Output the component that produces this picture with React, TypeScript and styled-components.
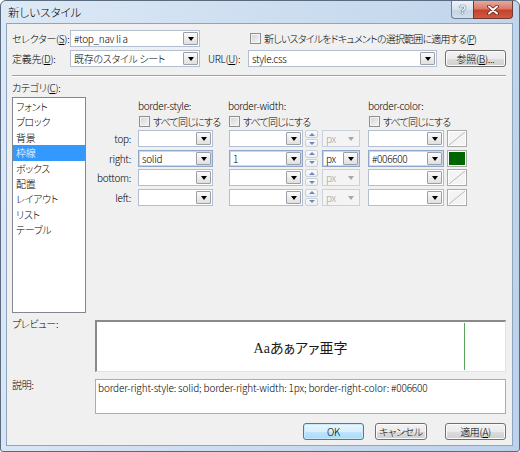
import React from "react";
import styled, { createGlobalStyle } from "styled-components";

const GlobalStyle = createGlobalStyle`
  html, body { margin: 0; padding: 0; background: #fff; }
  body {
    font-family: "Noto Sans CJK JP", "Noto Sans", sans-serif;
    font-size: 10px;
    font-weight: 300;
    letter-spacing: -0.3px;
    color: #000;
    font-feature-settings: "palt";
  }
  #root { width: 520px; height: 452px; }
`;

const Window = styled.div`
  width: 520px;
  height: 452px;
  box-sizing: border-box;
  display: flex;
  flex-direction: column;
  border: 1px solid #5a6b80;
  border-radius: 6px 6px 3px 3px;
  background: linear-gradient(100deg, #dde9f6 0%, #cddef0 45%, #bcd2ea 100%);
  overflow: hidden;
`;

const TitleBar = styled.div`
  height: 22px;
  display: flex;
  align-items: flex-start;
  flex-shrink: 0;
`;

const Title = styled.div`
  padding-left: 7px;
  line-height: 22px;
  font-size: 11.5px;
  letter-spacing: 0;
`;

const Caption = styled.div`
  margin-left: auto;
  margin-right: 6px;
  display: flex;
`;

const HelpButton = styled.div`
  width: 22px;
  height: 18px;
  box-sizing: border-box;
  border: 1px solid #6c7d94;
  border-top: none;
  border-right: none;
  border-radius: 0 0 0 4px;
  background: linear-gradient(#eef3f9 0%, #d8e2ee 50%, #c4d2e3 51%, #d2deeb 100%);
  display: flex;
  align-items: center;
  justify-content: center;
  color: #f4f6f9;
  font-family: "Liberation Sans", sans-serif;
  font-weight: bold;
  font-size: 12px;
  text-shadow: 0 0 1px #2f4360, 0 0 1px #2f4360;
`;

const CloseButton = styled.div`
  width: 40px;
  height: 18px;
  box-sizing: border-box;
  border: 1px solid #6b3a34;
  border-top: none;
  border-radius: 0 0 4px 0;
  background: linear-gradient(#eaa898 0%, #d97a66 45%, #c4422c 55%, #d4583f 100%);
  display: flex;
  align-items: center;
  justify-content: center;
`;

const Client = styled.div`
  flex: 1;
  margin: 0 6px 5px 5px;
  border: 1px solid #8ea5c0;
  background: #f0f0f0;
  padding: 6px 6px 0 5px;
  display: flex;
  flex-direction: column;
`;

const Row = styled.div<{ $mt?: number }>`
  display: flex;
  align-items: center;
  height: 17px;
  margin-top: ${(p) => p.$mt ?? 0}px;
  flex-shrink: 0;
`;

const Label = styled.div<{ $w?: number; $ml?: number }>`
  width: ${(p) => (p.$w ? `${p.$w}px` : "auto")};
  margin-left: ${(p) => p.$ml ?? 0}px;
  flex-shrink: 0;
  white-space: nowrap;
`;

const ComboBox = styled.div<{ $w: number; $ml?: number; $active?: boolean; $disabled?: boolean }>`
  width: ${(p) => p.$w}px;
  height: 17px;
  margin-left: ${(p) => p.$ml ?? 0}px;
  box-sizing: border-box;
  flex-shrink: 0;
  display: flex;
  align-items: center;
  background: ${(p) => (p.$disabled ? "#f4f4f4" : "#fff")};
  border: 1px solid ${(p) => (p.$active ? "#8ea6c9" : p.$disabled ? "#c9d1dc" : "#b3bfd0")};
  box-shadow: ${(p) => (p.$active ? "inset 0 0 0 1px #cbd8ea" : "none")};
  padding: 0 1px 0 3px;
`;

const ComboText = styled.span<{ $disabled?: boolean }>`
  flex: 1;
  overflow: hidden;
  white-space: nowrap;
  color: ${(p) => (p.$disabled ? "#a0a0a0" : "#000")};
  line-height: 15px;
`;

const DropButton = styled.span<{ $disabled?: boolean }>`
  width: 15px;
  height: 13px;
  box-sizing: border-box;
  border: 1px solid ${(p) => (p.$disabled ? "transparent" : "#9a9fa8")};
  border-radius: 1px;
  background: ${(p) => (p.$disabled ? "transparent" : "linear-gradient(#fbfbfb, #e0e0e0)")};
  display: flex;
  align-items: center;
  justify-content: center;
`;

const Arrow = styled.span<{ $disabled?: boolean }>`
  width: 0;
  height: 0;
  margin-top: 1px;
  border-left: 3.5px solid transparent;
  border-right: 3.5px solid transparent;
  border-top: 4px solid ${(p) => (p.$disabled ? "#a8a8a8" : "#000")};
`;

const CheckWrap = styled.div<{ $ml?: number }>`
  display: flex;
  align-items: center;
  margin-left: ${(p) => p.$ml ?? 0}px;
  white-space: nowrap;
  letter-spacing: -0.8px;
`;

const CheckBox = styled.span`
  width: 11px;
  height: 11px;
  box-sizing: border-box;
  border: 1px solid #8e8f8f;
  background: linear-gradient(135deg, #d0d3d8 0%, #f6f6f6 100%);
  box-shadow: inset 0 0 0 1px #f4f4f4;
  margin-right: 3px;
  flex-shrink: 0;
`;

const PushButton = styled.button<{ $w: number; $ml?: number; $default?: boolean }>`
  width: ${(p) => p.$w}px;
  height: 17px;
  margin-left: ${(p) => p.$ml ?? 0}px;
  padding: 0;
  flex-shrink: 0;
  font: inherit;
  letter-spacing: inherit;
  color: #000;
  border-radius: 3px;
  border: 1px solid ${(p) => (p.$default ? "#3c7fb1" : "#707070")};
  background: ${(p) =>
    p.$default
      ? "linear-gradient(#eaf6fd 0%, #d9f0fc 50%, #bee6fd 51%, #a7d9f5 100%)"
      : "linear-gradient(#f2f2f2 0%, #ebebeb 50%, #dddddd 51%, #cfcfcf 100%)"};
  box-shadow: inset 0 0 0 1px ${(p) => (p.$default ? "#cde9f9" : "#fbfbfb")};
`;

const Separator = styled.div`
  margin-top: 8px;
  border-top: 1px solid #a0a0a0;
  border-bottom: 1px solid #fff;
  flex-shrink: 0;
`;

const SectionLabel = styled.div`
  margin-top: 4px;
  line-height: 14px;
`;

const Main = styled.div`
  margin-top: 2px;
  height: 216px;
  display: flex;
  flex-shrink: 0;
`;

const ListBox = styled.div`
  width: 74px;
  box-sizing: border-box;
  border: 1px solid #828790;
  background: #fff;
  padding-top: 1px;
`;

const ListItem = styled.div<{ $selected?: boolean }>`
  height: 15.4px;
  line-height: 15.4px;
  padding-left: 3px;
  background: ${(p) => (p.$selected ? "#3399ff" : "transparent")};
  color: ${(p) => (p.$selected ? "#fff" : "#000")};
  white-space: nowrap;
`;

const BorderPanel = styled.div`
  flex: 1;
  padding-top: 2px;
  display: flex;
  flex-direction: column;
`;

const PanelRow = styled.div<{ $h: number; $mt?: number }>`
  height: ${(p) => p.$h}px;
  margin-top: ${(p) => p.$mt ?? 0}px;
  display: flex;
  align-items: center;
`;

const Col = styled.div<{ $w: number; $ml?: number }>`
  width: ${(p) => p.$w}px;
  margin-left: ${(p) => p.$ml ?? 0}px;
  flex-shrink: 0;
  display: flex;
  align-items: center;
  white-space: nowrap;
`;

const SideLabel = styled.div`
  width: 45px;
  text-align: right;
  flex-shrink: 0;
`;

const Fields = styled.div`
  margin-top: 2px;
  display: flex;
  flex-direction: column;
  gap: 2.6px;
`;

const Spinner = styled.div`
  width: 13px;
  height: 17px;
  margin-left: 2px;
  flex-shrink: 0;
  display: flex;
  flex-direction: column;
  gap: 1px;
`;

const SpinHalf = styled.div`
  flex: 1;
  box-sizing: border-box;
  border: 1px solid #c8d0da;
  border-radius: 2px;
  background: linear-gradient(#fafbfc, #eceff3);
  display: flex;
  align-items: center;
  justify-content: center;
`;

const SpinArrow = styled.span<{ $up?: boolean }>`
  width: 0;
  height: 0;
  border-left: 3px solid transparent;
  border-right: 3px solid transparent;
  ${(p) => (p.$up ? "border-bottom: 3px solid #6f89b5;" : "border-top: 3px solid #6f89b5;")}
`;

const Swatch = styled.div<{ $color?: string }>`
  width: 20px;
  height: 17px;
  margin-left: 3px;
  box-sizing: border-box;
  flex-shrink: 0;
  border: 1px solid #a9a9a9;
  box-shadow: inset 0 0 0 1px #fff;
  background: ${(p) => p.$color ?? "#f4f4f4"};
  display: flex;
`;

const BoxRow = styled.div<{ $h: number; $mt: number }>`
  margin-top: ${(p) => p.$mt}px;
  height: ${(p) => p.$h}px;
  display: flex;
  flex-shrink: 0;
`;

const BoxLabel = styled.div<{ $mt?: number }>`
  width: 83px;
  flex-shrink: 0;
  line-height: 12px;
  margin-top: ${(p) => p.$mt ?? 0}px;
`;

const PreviewBox = styled.div`
  flex: 1;
  box-sizing: border-box;
  border-top: 2px solid #8a8a8a;
  border-left: 2px solid #8a8a8a;
  border-right: 1px solid #e2e2e2;
  border-bottom: 1px solid #e2e2e2;
  background: #fff;
  display: flex;
  padding: 1px 0;
`;

const Sample = styled.div`
  flex: 1;
  margin-right: 40px;
  padding-left: 40px;
  border-right: 1px solid #5aa55a;
  display: flex;
  align-items: center;
  justify-content: center;
  font-family: "Liberation Serif", "Noto Sans CJK JP", serif;
  font-weight: 400;
  letter-spacing: 0;
  font-size: 14px;
  color: #1a1a1a;
`;

const DescBox = styled.div`
  flex: 1;
  box-sizing: border-box;
  border: 1px solid #abadb3;
  background: #fff;
  padding: 1px 2px;
  letter-spacing: -0.15px;
  line-height: 13px;
  white-space: nowrap;
  overflow: hidden;
`;

const ButtonRow = styled.div`
  margin-top: 9px;
  display: flex;
  justify-content: flex-end;
  flex-shrink: 0;
`;

type ComboProps = { w: number; ml?: number; value?: string; active?: boolean; disabled?: boolean };

const Combo = ({ w, ml, value, active, disabled }: ComboProps) => (
  <ComboBox $w={w} $ml={ml} $active={active} $disabled={disabled}>
    <ComboText $disabled={disabled}>{value}</ComboText>
    <DropButton $disabled={disabled}>
      <Arrow $disabled={disabled} />
    </DropButton>
  </ComboBox>
);

const Check = ({ label, ml }: { label: React.ReactNode; ml?: number }) => (
  <CheckWrap $ml={ml}>
    <CheckBox />
    {label}
  </CheckWrap>
);

const categories = ["フォント", "ブロック", "背景", "枠線", "ボックス", "配置", "レイアウト", "リスト", "テーブル"];

const sides = [
  { name: "top", style: "", width: "", color: "", swatch: undefined as string | undefined },
  { name: "right", style: "solid", width: "1", color: "#006600", swatch: "#006600" },
  { name: "bottom", style: "", width: "", color: "", swatch: undefined },
  { name: "left", style: "", width: "", color: "", swatch: undefined },
];

export default function App() {
  return (
    <>
      <GlobalStyle />
      <Window>
        <TitleBar>
          <Title>新しいスタイル</Title>
          <Caption>
            <HelpButton>?</HelpButton>
            <CloseButton>
              <svg width="12" height="10" viewBox="0 0 12 10">
                <path d="M2 1.5 L10 8.5 M10 1.5 L2 8.5" stroke="#5a2218" strokeWidth="3.6" strokeLinecap="round" />
                <path d="M2 1.5 L10 8.5 M10 1.5 L2 8.5" stroke="#fff" strokeWidth="2" strokeLinecap="round" />
              </svg>
            </CloseButton>
          </Caption>
        </TitleBar>

        <Client>
          <Row>
            <Label $w={58}>
              セレクター(<u>S</u>):
            </Label>
            <Combo w={130} value="#top_nav li a" />
            <Check
              ml={50}
              label={
                <span>
                  新しいスタイルをドキュメントの選択範囲に適用する(<u>P</u>)
                </span>
              }
            />
          </Row>
          <Row $mt={3}>
            <Label $w={58}>
              定義先(<u>D</u>):
            </Label>
            <Combo w={130} value="既存のスタイル シート" />
            <Label $w={40} $ml={8}>
              URL(<u>U</u>):
            </Label>
            <Combo w={189} value="style.css" />
            <PushButton $w={61} $ml={8}>
              参照(<u>B</u>)...
            </PushButton>
          </Row>

          <Separator />

          <SectionLabel>
            カテゴリ(<u>C</u>):
          </SectionLabel>
          <Main>
            <ListBox>
              {categories.map((c) => (
                <ListItem key={c} $selected={c === "枠線"}>
                  {c}
                </ListItem>
              ))}
            </ListBox>

            <BorderPanel>
              <PanelRow $h={13}>
                <Col $w={75} $ml={52}>border-style:</Col>
                <Col $w={131} $ml={15}>border-width:</Col>
                <Col $w={99} $ml={9}>border-color:</Col>
              </PanelRow>
              <PanelRow $h={13} $mt={3}>
                <Col $w={75} $ml={53}>
                  <Check label="すべて同じにする" />
                </Col>
                <Col $w={131} $ml={15}>
                  <Check label="すべて同じにする" />
                </Col>
                <Col $w={99} $ml={9}>
                  <Check label="すべて同じにする" />
                </Col>
              </PanelRow>

              <Fields>
                {sides.map((s) => {
                  const active = s.name === "right";
                  return (
                    <PanelRow $h={17} key={s.name}>
                      <SideLabel>{s.name}:</SideLabel>
                      <Combo w={75} ml={7} value={s.style} active={active} />
                      <Combo w={74} ml={16} value={s.width} active={active} />
                      <Spinner>
                        <SpinHalf>
                          <SpinArrow $up />
                        </SpinHalf>
                        <SpinHalf>
                          <SpinArrow />
                        </SpinHalf>
                      </Spinner>
                      <Combo w={38} ml={4} value="px" active={active} disabled={!active} />
                      <Combo w={76} ml={8} value={s.color} active={active} />
                      <Swatch $color={s.swatch}>
                        {!s.swatch && (
                          <svg width="18" height="15" viewBox="0 0 18 15">
                            <line x1="1" y1="14" x2="17" y2="1" stroke="#b8b8b8" strokeWidth="1" />
                          </svg>
                        )}
                      </Swatch>
                    </PanelRow>
                  );
                })}
              </Fields>
            </BorderPanel>
          </Main>

          <BoxRow $h={52} $mt={7}>
            <BoxLabel $mt={-2}>プレビュー:</BoxLabel>
            <PreviewBox>
              <Sample>Aaあぁアァ亜字</Sample>
            </PreviewBox>
          </BoxRow>

          <BoxRow $h={35} $mt={7}>
            <BoxLabel>説明:</BoxLabel>
            <DescBox>border-right-style: solid; border-right-width: 1px; border-right-color: #006600</DescBox>
          </BoxRow>

          <ButtonRow>
            <PushButton $w={61} $default>
              OK
            </PushButton>
            <PushButton $w={52} $ml={11}>
              キャンセル
            </PushButton>
            <PushButton $w={61} $ml={18}>
              適用(<u>A</u>)
            </PushButton>
          </ButtonRow>
        </Client>
      </Window>
    </>
  );
}
